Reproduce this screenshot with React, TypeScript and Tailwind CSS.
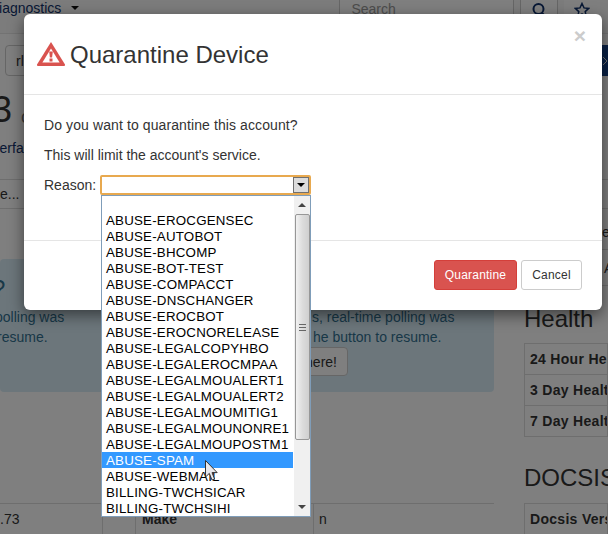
import React from "react";

const reasons = [
  "",
  "ABUSE-EROCGENSEC",
  "ABUSE-AUTOBOT",
  "ABUSE-BHCOMP",
  "ABUSE-BOT-TEST",
  "ABUSE-COMPACCT",
  "ABUSE-DNSCHANGER",
  "ABUSE-EROCBOT",
  "ABUSE-EROCNORELEASE",
  "ABUSE-LEGALCOPYHBO",
  "ABUSE-LEGALEROCMPAA",
  "ABUSE-LEGALMOUALERT1",
  "ABUSE-LEGALMOUALERT2",
  "ABUSE-LEGALMOUMITIG1",
  "ABUSE-LEGALMOUNONRE1",
  "ABUSE-LEGALMOUPOSTM1",
  "ABUSE-SPAM",
  "ABUSE-WEBMAIL",
  "BILLING-TWCHSICAR",
  "BILLING-TWCHSIHI",
];

const healthRows = ["24 Hour Health", "3 Day Health", "7 Day Health"];

const App = () => {
  return (
    <div className="relative w-[608px] h-[534px] overflow-hidden bg-white text-[14px] leading-[20px] text-[#333] font-['Liberation_Sans',Arial,sans-serif]">
      {/* page behind the dialog */}
      <div className="h-[534px] overflow-hidden">
        <div className="h-[34px] bg-[#f8f8f8] border-b border-[#e7e7e7] flex items-start">
          <span className="ml-[-11px] mt-[-2px] text-[#10316b]">Diagnostics</span>
          <span className="ml-[10px] mt-[6px] w-0 h-0 border-x-[4px] border-x-transparent border-t-[4px] border-t-[#111]" />
          <div className="ml-[260px] w-[175px] h-[33px] bg-white border-x border-[#ccc] pl-[11px] text-[#999] mt-0">
            <span className="block mt-[-1px]">Search</span>
          </div>
          <div className="ml-[6px] w-[38px] h-[33px] bg-white border-x border-[#ccc] flex justify-center pt-[3px]">
            <svg width="16" height="16" viewBox="0 0 16 16" fill="none" stroke="#10316b" strokeWidth="2">
              <circle cx="7.5" cy="6" r="5" />
              <path d="M11 10l4 4" />
            </svg>
          </div>
          <div className="ml-[6px] w-[36px] h-[33px] bg-white flex justify-center pt-[2px]">
            <svg width="16" height="16" viewBox="0 0 16 16" fill="none" stroke="#10316b" strokeWidth="1.5">
              <path d="M8 1.5l2 4.4 4.7.5-3.5 3.2 1 4.7L8 11.9l-4.2 2.4 1-4.7L1.3 6.4 6 5.9z" />
            </svg>
          </div>
        </div>
        <div className="h-[31px] mt-[11px] flex justify-between">
          <div className="ml-[5px] w-[80px] border border-[#ccc] rounded-[4px] px-[10px] flex items-center">rl</div>
          <div className="w-[6px] bg-[#12408a] flex items-center">
            <svg width="6" height="10" viewBox="0 0 6 10" fill="none" stroke="#ddd" strokeWidth="1">
              <path d="M1 1l4 4-4 4" />
            </svg>
          </div>
        </div>
        <div className="mt-[14px] ml-[-8px] h-[40px] flex items-end gap-[9px]">
          <span className="text-[36px] leading-[40px]">3</span>
          <span className="text-[18px] leading-[26px] text-[#777]">c</span>
        </div>
        <div className="mt-[8px] ml-[-16px] text-[#10316b]">Interfaces</div>
        <div className="mt-[21px] border-t border-[#ddd] h-[29px] flex items-center">e...</div>
        <div className="border-t border-[#ddd] h-[29px]" />
        <div className="grid grid-cols-[494px_84px] gap-x-[30px]">
          <div>
            <div className="h-[133px] mt-[22px] bg-[#d9edf7] rounded-[4px] text-[#31708f] flex">
              <div className="w-[120px] shrink-0 pt-[17px]">
                <div className="text-[24px] leading-[26px] ml-[-8px]">?</div>
                <div className="mt-[5px] ml-[-5px] whitespace-nowrap">polling was</div>
                <div className="ml-[-3px] whitespace-nowrap">resume.</div>
              </div>
              <div className="ml-[190px] pt-[48px] whitespace-nowrap">
                <div className="ml-[2px]">s, real-time polling was</div>
                <div className="ml-[3px]">he button to resume.</div>
                <div className="ml-[-20px] w-[58px] h-[29px] bg-white border border-[#ccc] rounded-[4px] text-[#333] flex items-center justify-end pr-[10px]">
                  here!
                </div>
              </div>
            </div>
            <div className="mt-[111px] border-t border-[#ddd] grid grid-cols-[102px_33px_178px_1fr] h-[40px]">
              <div className="pt-[5px] whitespace-nowrap">.73</div>
              <div className="border-l border-[#ddd]" />
              <div className="border-l border-[#ddd] font-bold pl-[6px] pt-[5px] whitespace-nowrap">Make</div>
              <div className="border-l border-[#ddd] pl-[5px] pt-[5px]">n</div>
            </div>
          </div>
          <div className="w-[84px]">
            <div className="mt-[-15px] h-[84px]">
              <div className="h-[28px] pl-[78px] border-b border-[#ddd] overflow-hidden">e</div>
              <div className="h-[36px] pl-[80px] pt-[8px] border-b border-[#ddd] overflow-hidden">A</div>
            </div>
            <div className="text-[24px] leading-[26px]">Health</div>
            <div className="mt-[11px] border border-b-0 border-[#ddd] font-bold tracking-[0.3px]">
              {healthRows.map((row) => (
                <div key={row} className="h-[31px] border-b border-[#ddd] pl-[5px] flex items-center whitespace-nowrap overflow-hidden">
                  {row}
                </div>
              ))}
            </div>
            <div className="mt-[28px] text-[24px] leading-[26px]">DOCSIS</div>
            <div className="mt-[12px] border border-[#ddd] h-[40px] pl-[5px] pt-[5px] font-bold tracking-[0.3px] whitespace-nowrap overflow-hidden">Docsis Version</div>
          </div>
        </div>
      </div>

      {/* backdrop */}
      <div className="absolute inset-0 bg-black/50" />

      {/* dialog */}
      <div className="absolute left-[24px] top-[14px] w-[578px] h-[296px] bg-white rounded-[6px] shadow-[0_5px_15px_rgba(0,0,0,0.5)]">
        <div className="h-[81px] border-b border-[#e5e5e5] pl-[13px] pr-[16px] flex items-center justify-between">
          <div className="flex items-center gap-[5px]">
            <svg width="28" height="24" viewBox="0 0 28 24">
              <path d="M14 0 L28 22.5 Q28.4 24 27 24 H1 Q-0.4 24 0 22.5 Z" fill="#d9534f" />
              <path d="M14 6.5 L22.6 20.5 H5.4 Z" fill="#fff" />
              <path d="M12.2 9.5h3.6l-.7 6h-2.2z" fill="#d9534f" />
              <rect x="12.5" y="16.5" width="3" height="3" fill="#d9534f" />
            </svg>
            <h4 className="mt-[2px] text-[24px] leading-[26px] text-[#333]">Quarantine Device</h4>
          </div>
          <span className="mt-[-37px] text-[21px] leading-[21px] font-bold text-[#ccc]">×</span>
        </div>
        <div className="pl-[20px] pt-[20px] h-[146px] border-b border-[#e5e5e5]">
          <p className="tracking-[0.1px]">Do you want to quarantine this account?</p>
          <p className="mt-[10px]">This will limit the account's service.</p>
          <div className="mt-[10px] flex items-center gap-[4px]">
            <span>Reason:</span>
            <div className="w-[211px] h-[20px] bg-white border-2 border-[#e8a94f] rounded-[2px] flex justify-end">
              <div className="w-[16px] h-[16px] bg-[#dcdcdc] border border-[#707070] flex items-center justify-center">
                <span className="w-0 h-0 border-x-[4px] border-x-transparent border-t-[4px] border-t-black" />
              </div>
            </div>
          </div>
        </div>
        <div className="flex justify-end gap-[4px] pr-[20px] pt-[19px]">
          <button className="w-[83px] h-[30px] bg-[#d9534f] border border-[#d43f3a] rounded-[3px] text-white text-[12px] tracking-[0.2px]">Quarantine</button>
          <button className="w-[61px] h-[30px] bg-white border border-[#ccc] rounded-[3px] text-[#333] text-[12px] tracking-[0.2px]">Cancel</button>
        </div>
      </div>

      {/* open select list */}
      <div className="absolute left-[101px] top-[195px] w-[210px] h-[322px] bg-white border border-[#7f9db9] flex overflow-hidden text-black text-[13.33px] leading-[18px] tracking-[0.2px]">
        <div className="w-[191px] mr-[1px]">
          {reasons.map((reason) => (
            <div
              key={reason || "blank"}
              className={
                reason === "ABUSE-SPAM"
                  ? "h-[16px] pl-[4px] bg-[#3399ff] text-white whitespace-nowrap"
                  : "h-[16px] pl-[4px] whitespace-nowrap"
              }
            >
              {reason}
            </div>
          ))}
        </div>
        <div className="w-[16px] bg-[#f0f0f0] flex flex-col items-center">
          <div className="h-[18px] flex items-center justify-center">
            <span className="w-0 h-0 border-x-[4px] border-x-transparent border-b-[4px] border-b-[#444]" />
          </div>
          <div className="w-[15px] h-[226px] rounded-[2px] border border-[#979797] bg-gradient-to-r from-[#f2f2f2] via-[#dcdcdc] to-[#cfcfcf] flex items-center justify-center">
            <span className="w-[7px] h-[7px] border-y border-[#666] bg-[linear-gradient(#666,#666)] bg-center bg-[length:7px_1px] bg-no-repeat" />
          </div>
          <div className="flex-1" />
          <div className="h-[18px] flex items-center justify-center">
            <span className="w-0 h-0 border-x-[4px] border-x-transparent border-t-[4px] border-t-[#444]" />
          </div>
        </div>
      </div>

      {/* mouse pointer */}
      <svg className="absolute left-[205px] top-[460px]" width="14" height="22" viewBox="0 0 14 22">
        <path d="M0.5 0.5 V17 L4.3 13.4 L7 20 L9.6 19 L7 12.6 H12.2 Z" fill="#e8e8ec" stroke="#333" strokeWidth="1" />
      </svg>
    </div>
  );
};

export default App;
